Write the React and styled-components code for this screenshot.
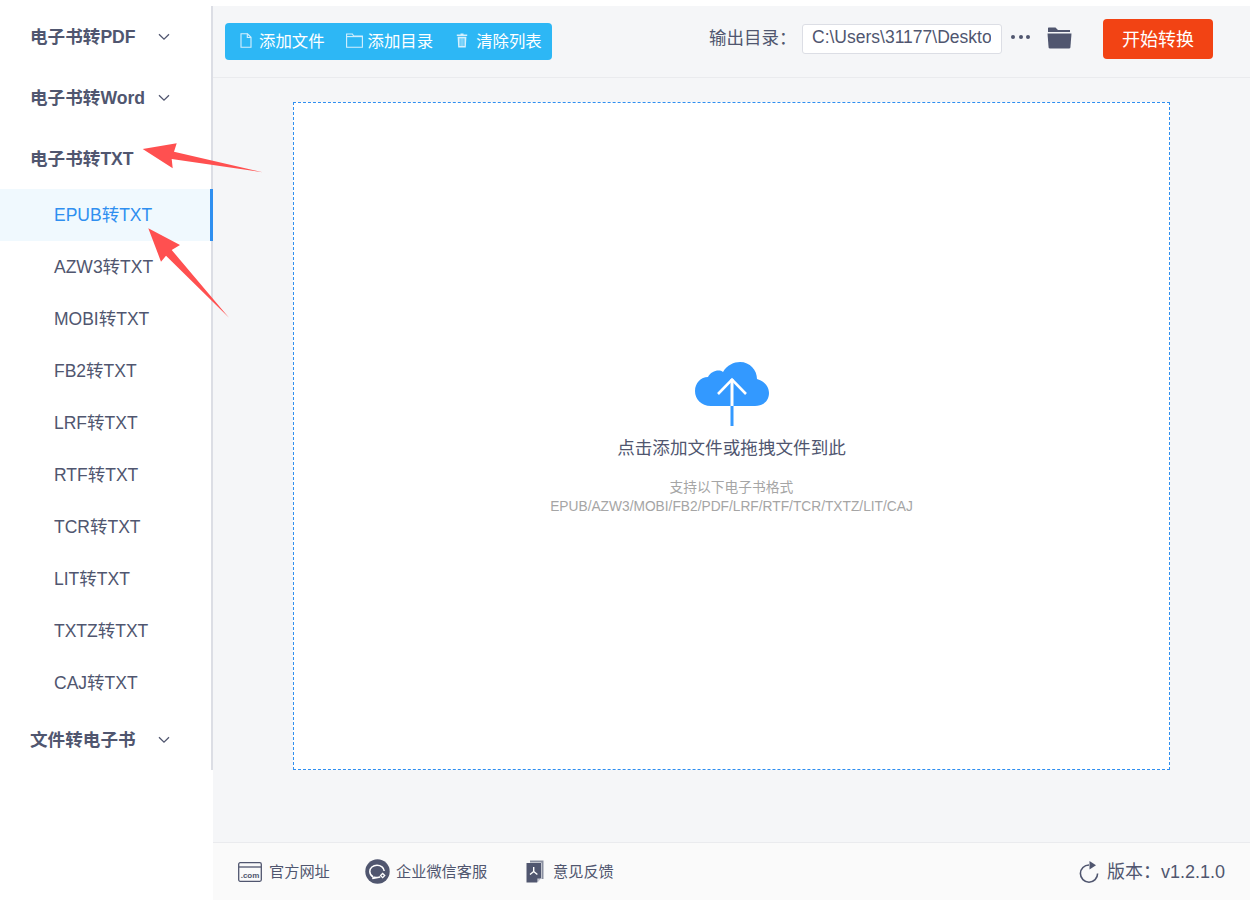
import React from "react";
import styled, { createGlobalStyle } from "styled-components";

const FONT = `"Liberation Sans", "Noto Sans CJK SC", sans-serif`;

const GlobalStyle = createGlobalStyle`
  * { box-sizing: border-box; }
  html, body { margin: 0; padding: 0; background: #fff; }
  body { font-family: ${FONT}; color: #50566f; }
`;

const subItems = [
  "EPUB转TXT",
  "AZW3转TXT",
  "MOBI转TXT",
  "FB2转TXT",
  "LRF转TXT",
  "RTF转TXT",
  "TCR转TXT",
  "LIT转TXT",
  "TXTZ转TXT",
  "CAJ转TXT",
];

const Chevron = () => (
  <ChevronIcon viewBox="0 0 12 8" fill="none" stroke="#50566f" strokeWidth="1.3">
    <path d="M1 1.2 L6 6.2 L11 1.2" />
  </ChevronIcon>
);

const FileIcon = () => (
  <svg width="12" height="15" viewBox="0 0 12 15" fill="none" stroke="#d5f0fd" strokeWidth="1.1">
    <path d="M1 .8 H7.5 L11 4.3 V14.2 H1 Z" />
    <path d="M7.3 .8 V4.5 H11" />
  </svg>
);

const FolderIcon = () => (
  <svg width="17" height="15" viewBox="0 0 17 15" fill="none" stroke="#d5f0fd" strokeWidth="1.1">
    <path d="M.6 1 H6.4 L7.6 3 H16.4 V14.2 H.6 Z" />
    <path d="M.6 3.6 H16.4" />
  </svg>
);

const TrashIcon = () => (
  <svg width="12" height="15" viewBox="0 0 12 15" fill="#d5f0fd">
    <path d="M4.5 .5 H7.5 V1.6 H11.2 V3 H.8 V1.6 H4.5 Z" />
    <path d="M1.6 3.8 H10.4 L9.8 14.4 H2.2 Z M3.6 5.2 V13 H4.6 V5.2 Z M5.5 5.2 V13 H6.5 V5.2 Z M7.4 5.2 V13 H8.4 V5.2 Z" fillRule="evenodd" />
  </svg>
);

const OpenFolderIcon = () => (
  <svg width="25" height="22" viewBox="0 0 25 22" fill="#50566f">
    <path d="M1.5 0.5 H8.5 L11 3 H23 V5 H1 V1 Z" />
    <path d="M.5 6.4 H24.5 L23.4 20.4 Q23.3 21.5 22 21.5 H3 Q1.7 21.5 1.6 20.4 Z" />
  </svg>
);

const CloudIcon = () => (
  <svg width="74" height="64" viewBox="0 0 74 64">
    <path
      d="M16 44 C6 44 0 37 0 29 C0 21 6 15 13 15 C16 9 24 7 28 10 C32 3 39 0 45 0 C55 0 62 8 62 17 C69 19 74 24 74 31 C74 39 68 44 60 44 Z"
      fill="#3399ff"
    />
    <path d="M37 64 V16" stroke="#3399ff" strokeWidth="3" fill="none" />
    <path d="M37 17 V44" stroke="#fff" strokeWidth="3" fill="none" />
    <path d="M23 32 L37 17.5 L51 32" stroke="#fff" strokeWidth="2.6" fill="none" />
  </svg>
);

const WebIcon = () => (
  <svg width="24" height="20" viewBox="0 0 24 20">
    <rect x=".7" y=".7" width="22.6" height="18.6" rx="1.5" fill="none" stroke="#50566f" strokeWidth="1.3" />
    <path d="M1 5 H23" stroke="#50566f" strokeWidth="1.3" />
    <text x="12" y="15.5" fontSize="8" fontWeight="700" textAnchor="middle" fill="#50566f" fontFamily="Liberation Sans">.com</text>
  </svg>
);

const ChatIcon = () => (
  <svg width="25" height="25" viewBox="0 0 25 25">
    <circle cx="12.5" cy="12.5" r="12.2" fill="#50566f" />
    <path
      d="M8.2 18 C5.9 16.6 4.8 14.6 4.8 12.4 C4.8 8.8 8 6.2 12 6.2 C15.9 6.2 19 8.6 19.2 12 M15.2 17.9 C13.6 18.6 11.3 18.7 9.5 18.2 L7.4 19.6 Z"
      fill="none"
      stroke="#fff"
      strokeWidth="1.5"
    />
    <path d="M17.6 13.6 L20.6 16.6 L17.6 19.6 L14.6 16.6 Z" fill="#fff" />
    <path d="M17.6 15.4 L18.8 16.6 L17.6 17.8 L16.4 16.6 Z" fill="#50566f" />
  </svg>
);

const FeedbackIcon = () => (
  <svg width="18" height="23" viewBox="0 0 18 23">
    <path d="M4 .5 H17.5 V19 H15.5 V2.5 H4 Z" fill="#8a8fa0" />
    <path d="M.5 3 H15 V18 L11 22.5 H.5 Z" fill="#50566f" />
    <path d="M11.4 22.4 V18.4 H15 Z" fill="#c9ccd4" />
    <path d="M7.7 7 V11.5 M7.7 11.5 L4 14.5 M7.7 11.5 L11.4 14.5" stroke="#fff" strokeWidth="1.4" fill="none" />
  </svg>
);

const RefreshIcon = () => (
  <svg width="20" height="22" viewBox="0 0 20 22" fill="none">
    <path d="M10 4 A8.6 8.6 0 1 0 18.6 12.6" stroke="#50566f" strokeWidth="1.6" />
    <path d="M10.5 0 L17 4.3 L10.5 8.4 Z" fill="#50566f" />
  </svg>
);

const App = () => {
  return (
    <Page>
      <GlobalStyle />
      <Sidebar>
        <Nav>
          <GroupHead>
            <GroupLabel>电子书转PDF</GroupLabel>
            <Chevron />
          </GroupHead>
          <GroupHead>
            <GroupLabel>电子书转Word</GroupLabel>
            <Chevron />
          </GroupHead>
          <GroupHead>
            <GroupLabel>电子书转TXT</GroupLabel>
          </GroupHead>
          {subItems.map((item, i) => (
            <SubItem key={item} $active={i === 0}>
              {item}
            </SubItem>
          ))}
          <GroupHead>
            <GroupLabel>文件转电子书</GroupLabel>
            <Chevron />
          </GroupHead>
        </Nav>
      </Sidebar>

      <Main>
        <TopBar>
          <ToolGroup>
            <ToolButton $iconGap={7}>
              <FileIcon />
              添加文件
            </ToolButton>
            <ToolButton $iconGap={5}>
              <FolderIcon />
              添加目录
            </ToolButton>
            <ToolButton $iconGap={8} $offset={2}>
              <TrashIcon />
              清除列表
            </ToolButton>
          </ToolGroup>
          <OutputArea>
            <OutputLabel>输出目录：</OutputLabel>
            <PathInput readOnly value="C:\Users\31177\Desktop" />
            <Dots>
              <i />
              <i />
              <i />
            </Dots>
            <FolderSlot>
              <OpenFolderIcon />
            </FolderSlot>
            <StartButton>开始转换</StartButton>
          </OutputArea>
        </TopBar>

        <Content>
          <DropZone>
            <CloudIcon />
            <DropTitle>点击添加文件或拖拽文件到此</DropTitle>
            <DropHint>
              支持以下电子书格式
              <br />
              EPUB/AZW3/MOBI/FB2/PDF/LRF/RTF/TCR/TXTZ/LIT/CAJ
            </DropHint>
          </DropZone>
        </Content>

        <Footer>
          <FooterLink $width={127}>
            <WebIcon />
            <FooterText>官方网址</FooterText>
          </FooterLink>
          <FooterLink $width={161} $iconGap={6}>
            <ChatIcon />
            <FooterText>企业微信客服</FooterText>
          </FooterLink>
          <FooterLink $iconGap={9}>
            <FeedbackIcon />
            <FooterText>意见反馈</FooterText>
          </FooterLink>
          <Version>
            <RefreshIcon />
            <FooterText>版本：v1.2.1.0</FooterText>
          </Version>
        </Footer>
      </Main>

      {/* red annotation arrows drawn over the screenshot */}
      <Annotations viewBox="0 0 1250 900">
        <path d="M142.7 149 L176.7 143.3 L174 151.7 L262.7 172.3 L171.7 159 L172.7 168.3 Z" fill="#ff5050" />
        <path d="M148.3 228.3 L180 245 L171.7 250 L229 317.7 L166 255.7 L161 261.7 Z" fill="#ff5050" />
      </Annotations>
    </Page>
  );
};

const Page = styled.div`
  position: relative;
  width: 1250px;
  height: 900px;
  padding-top: 6px;
  display: grid;
  grid-template-columns: 213px 1fr;
  overflow: hidden;
  background: #fff;
`;

const Sidebar = styled.aside`
  background: #fff;
`;

const Nav = styled.nav`
  height: 764px;
  border-right: 2px solid #dcdee5;
`;

const GroupHead = styled.div`
  height: 61px;
  padding-left: 30px;
  display: flex;
  align-items: center;
`;

const GroupLabel = styled.span`
  width: 127px;
  padding-bottom: 3px;
  font-size: 17.6px;
  font-weight: 700;
  color: #50566f;
  white-space: nowrap;
`;

const ChevronIcon = styled.svg`
  width: 12px;
  height: 8px;
  margin-left: 1px;
`;

const SubItem = styled.div`
  height: 52px;
  margin-right: -2px;
  padding: 0 0 4px 54px;
  display: flex;
  align-items: center;
  font-size: 17.5px;
  color: ${(p) => (p.$active ? "#2f8ff0" : "#50566f")};
  background: ${(p) => (p.$active ? "#f0f9fe" : "transparent")};
  border-right: 3px solid ${(p) => (p.$active ? "#2f8ff0" : "transparent")};
`;

const Main = styled.main`
  display: flex;
  flex-direction: column;
  min-width: 0;
  background: #f5f6f8;
`;

const TopBar = styled.header`
  height: 72px;
  flex: none;
  padding: 0 37px 0 12px;
  display: flex;
  align-items: center;
  justify-content: space-between;
  border-bottom: 1px solid #eaebee;
`;

const ToolGroup = styled.div`
  width: 327px;
  height: 37px;
  margin-top: -1px;
  padding: 0 0 2px 15px;
  display: flex;
  align-items: center;
  gap: 21px;
  background: #2db7f5;
  border-radius: 4px;
`;

const ToolButton = styled.div`
  margin-left: ${(p) => p.$offset || 0}px;
  display: flex;
  align-items: center;
  gap: ${(p) => p.$iconGap}px;
  font-size: 16.4px;
  color: #fff;
  white-space: nowrap;
`;

const OutputArea = styled.div`
  margin-bottom: 6px;
  display: flex;
  align-items: center;
`;

const OutputLabel = styled.span`
  width: 93px;
  padding-bottom: 4px;
  font-size: 17.5px;
  white-space: nowrap;
  color: #50566f;
`;

const PathInput = styled.input`
  width: 200px;
  height: 30px;
  padding: 0 10px 2px 9px;
  border: 1px solid #dcdee5;
  border-radius: 3px;
  background: #fff;
  font-family: ${FONT};
  font-size: 17.5px;
  color: #50566f;
  outline: none;
`;

const Dots = styled.div`
  width: 19px;
  margin: 0 0 4px 9px;
  display: flex;
  justify-content: space-between;

  i {
    width: 4px;
    height: 4px;
    border-radius: 50%;
    background: #50566f;
  }
`;

const FolderSlot = styled.div`
  margin: 0 0 2px 17px;
  display: flex;
`;

const StartButton = styled.button`
  width: 110px;
  height: 40px;
  margin-left: 31px;
  padding: 0 0 2px;
  border: none;
  border-radius: 4px;
  background: #f24314;
  color: #fff;
  font-family: ${FONT};
  font-size: 18px;
`;

const Content = styled.section`
  flex: 1;
  min-height: 0;
  padding: 24px 80px 72px;
  display: flex;
`;

const DropZone = styled.div`
  flex: 1;
  padding-top: 259px;
  display: flex;
  flex-direction: column;
  align-items: center;
  background: #fff;
  border: 1px dashed #2f8ff0;
`;

const DropTitle = styled.div`
  margin-top: 10px;
  font-size: 17.6px;
  line-height: 24px;
  color: #50566f;
`;

const DropHint = styled.div`
  margin-top: 18px;
  font-size: 13.75px;
  line-height: 19px;
  color: #a5a5a5;
  text-align: center;
`;

const Footer = styled.footer`
  height: 58px;
  flex: none;
  padding: 0 25px;
  display: flex;
  align-items: center;
  background: #fafafa;
  border-top: 1px solid #eaebee;
`;

const FooterLink = styled.div`
  width: ${(p) => (p.$width ? `${p.$width}px` : "auto")};
  display: flex;
  align-items: center;
  gap: ${(p) => p.$iconGap || 7}px;
  font-size: 15.2px;
  color: #50566f;
  white-space: nowrap;
`;

const FooterText = styled.span`
  padding-bottom: 3px;
`;

const Version = styled.div`
  margin-left: auto;
  display: flex;
  align-items: center;
  gap: 8px;
  font-size: 18px;
  color: #50566f;
  white-space: nowrap;
`;

const Annotations = styled.svg`
  position: absolute;
  inset: 0;
  width: 1250px;
  height: 900px;
  pointer-events: none;
`;

export default App;
